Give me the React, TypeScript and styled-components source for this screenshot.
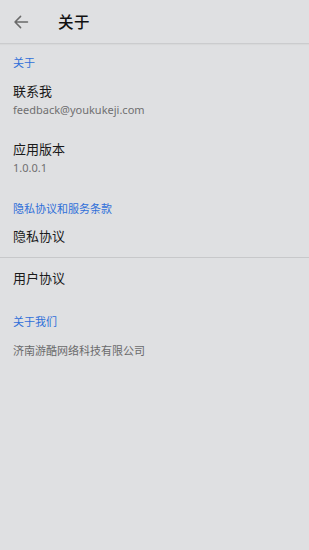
import React from "react";
import styled, { createGlobalStyle } from "styled-components";

const Global = createGlobalStyle`
  html, body { margin: 0; padding: 0; background: #dfe0e2; }
  body { font-family: "Noto Sans", "Noto Sans CJK SC", sans-serif; }
  #root { min-height: 550px; background: #dfe0e2; }
`;

const Page = styled.div`
  width: 309px;
  min-height: 550px;
  display: flex;
  flex-direction: column;
  background: #dfe0e2;
`;

const Header = styled.header`
  height: 43px;
  display: flex;
  align-items: center;
  border-bottom: 1px solid #cbccce;
  box-shadow: 0 1px 1px rgba(0, 0, 0, 0.03);
`;

const BackButton = styled.button`
  width: 44px;
  height: 43px;
  border: 0;
  background: transparent;
  padding: 0 0 0 13px;
  display: flex;
  align-items: center;
  cursor: pointer;
`;

const Title = styled.h1`
  margin: 0 0 0 14px;
  font-size: 15.5px;
  font-weight: 500;
  color: #111;
  letter-spacing: 0.5px;
  line-height: 20px;
`;

const SectionLabel = styled.div<{ $top: number }>`
  padding: ${(p) => p.$top}px 13px 0;
  font-size: 11px;
  line-height: 16px;
  color: #2f6fd9;
`;

const Item = styled.div<{ $top: number; $bottom: number }>`
  padding: ${(p) => p.$top}px 13px ${(p) => p.$bottom}px;
  display: flex;
  flex-direction: column;
`;

const ItemTitle = styled.div`
  font-size: 13px;
  line-height: 17px;
  color: #1a1a1a;
`;

const ItemSub = styled.div`
  margin-top: 2px;
  font-size: 11px;
  line-height: 16px;
  color: #6f6f70;
`;

const Divider = styled.hr`
  margin: 0;
  border: 0;
  height: 1px;
  background: #c7c8ca;
`;

const Company = styled.div`
  padding: 13px 13px 0;
  font-size: 11px;
  line-height: 16px;
  color: #6a6a6b;
`;

const BackIcon = () => (
  <svg width="16" height="16" viewBox="0 0 16 16" fill="none">
    <path d="M14.5 8H2.2M7.6 2.4L2 8l5.6 5.6" stroke="#6a6a6a" strokeWidth="1.5" strokeLinecap="round" strokeLinejoin="round" />
  </svg>
);

export default function App() {
  return (
    <Page>
      <Global />
      <Header>
        <BackButton aria-label="back">
          <BackIcon />
        </BackButton>
        <Title>关于</Title>
      </Header>

      <SectionLabel $top={11}>关于</SectionLabel>
      <Item $top={12} $bottom={11}>
        <ItemTitle>联系我</ItemTitle>
        <ItemSub>feedback@youkukeji.com</ItemSub>
      </Item>
      <Item $top={12} $bottom={11}>
        <ItemTitle>应用版本</ItemTitle>
        <ItemSub>1.0.0.1</ItemSub>
      </Item>

      <SectionLabel $top={14}>隐私协议和服务条款</SectionLabel>
      <Item $top={11} $bottom={12}>
        <ItemTitle>隐私协议</ItemTitle>
      </Item>
      <Divider />
      <Item $top={12} $bottom={14}>
        <ItemTitle>用户协议</ItemTitle>
      </Item>

      <SectionLabel $top={13}>关于我们</SectionLabel>
      <Company>济南游酷网络科技有限公司</Company>
    </Page>
  );
}
